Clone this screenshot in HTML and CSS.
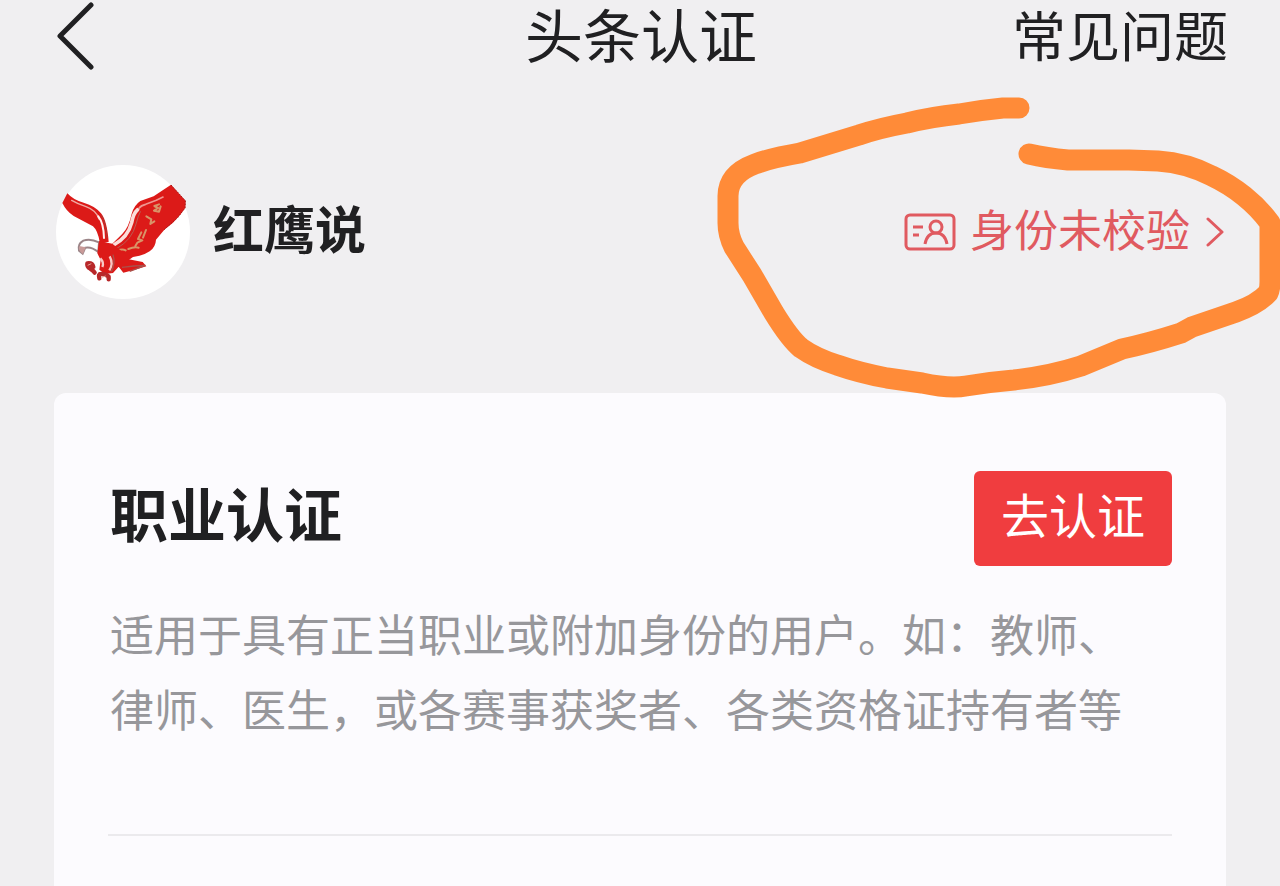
FILE: index.html
```html
<!DOCTYPE html>
<html lang="zh-CN">
  <head>
    <meta charset="UTF-8" />
    <meta name="viewport" content="width=device-width, initial-scale=1.0" />
    <title>头条认证</title>
    <link rel="stylesheet" href="styles.css">
  </head>
  <body>
    <header class="topbar">
      <button type="button" class="back" aria-label="返回">
        <svg width="40" height="68" viewBox="0 0 40 68" fill="none" stroke="#202022" stroke-width="5" stroke-linecap="round" stroke-linejoin="round">
          <path d="M37 3 6 34l31 31" />
        </svg>
      </button>
      <h1>头条认证</h1>
      <a href="#faq" class="faq">常见问题</a>
    </header>

    <section class="profile">
      <div class="avatar">
        <svg viewBox="47 44 402 402" aria-hidden="true">
          <!-- wings -->
          <path fill="#dc1a18" d="M81 129 66 158Q78 183 100 197L158 228Q172 240 178 275L205 275Q200 210 182 189Q165 167 130 157Q100 150 81 129Z" />
          <path fill="#dc1a18" d="M392 103 340 138 300 152Q282 164 274 190Q266 230 245 252L212 284Q190 270 178 277Q170 300 180 322L205 345 235 350 278 320Q310 316 328 303Q346 290 347 268L372 238 398 217 411 203 422 190 435 172 436 152Z" />
          <g fill="none" stroke-linecap="round" stroke-linejoin="round">
            <path stroke="#f0aaa4" stroke-width="4" d="M94 150q17 10 43 19 31 11 39 37" />
            <path stroke="#fff2f0" stroke-width="6" d="M174 198q16 20 17 65" />
            <path stroke="#a83c36" stroke-width="3" d="M200 262q-2-40-16-66" />
            <path stroke="#fbdedb" stroke-width="11" d="M220 284q43-23 54-67 5-28 18-39" />
            <path stroke="#bb5b53" stroke-width="3" d="M230 294q45-25 57-73 6-24 13-37" />
            <path stroke="#ef9690" stroke-width="5" d="M296 174q6-9 20-12l32-12 20-10" />
            <path stroke="#d99468" stroke-width="6" d="m356 162-14 5 11 6-12 8 15 3 5-16M318 198l15 9-3 14 12-8M317 239l-9 23M303 246l-10 20 13 4-15 7-6 10M264 296q17-7 31-4M232 300q15-5 24 0" />
            <path stroke="#a81a18" stroke-width="3" stroke-dasharray="3 6" d="m393 105 42 46-1 22-22 29-42 37" />
          </g>
          <!-- head and beak -->
          <path fill="#fff" stroke="#9b8588" stroke-width="6" d="M176 276q-27-13-47-5-18 10-13 30l11 9 8-18q18-4 39 13Z" />
          <path fill="#c99a98" d="M117 287q-3 17 11 24l8-20Z" />
          <!-- body, tail and claws -->
          <path fill="#dc1a18" d="m176 272 40 8 32 26 17 21 42 8 11 13-29 9-40 10-14-18-17 19-24 3-17-13 4-29-10-20Z" />
          <path fill="none" stroke="#f7c8c4" stroke-width="7" d="M208 318q12 22-1 42M180 324q12 12 6 26" />
          <path fill="none" stroke="#aa504a" stroke-width="4" d="M218 313q8 25-5 51M245 351l35-4 35-2-47 18" />
          <path fill="none" stroke="#b8282a" stroke-width="13" stroke-linecap="round" stroke-linejoin="round" d="M159 350q-3-13-18-11-2 10 9 16l8 6 5 6M177 384q-4-13 5-13 13-1 23 8v8" />
          <path fill="none" stroke="#e6a296" stroke-width="3" d="m142 345 11-5M184 381l12-4" />
        </svg>
      </div>
      <span class="name">红鹰说</span>
      <a href="#verify" class="status">
        <svg class="id-icon" width="52" height="38" viewBox="0 0 52 38" fill="none" stroke="currentColor" stroke-width="3" aria-hidden="true">
          <rect x="2" y="2" width="48" height="34" rx="4" />
          <path d="M9 14h10M9 22h6" />
          <circle cx="32" cy="14" r="6" />
          <path d="M21 31q2-11 11-11t11 11" />
        </svg>
        <span>身份未校验</span>
        <svg class="chevron" width="18" height="32" viewBox="0 0 18 32" fill="none" stroke="currentColor" stroke-width="3" stroke-linecap="round" stroke-linejoin="round" aria-hidden="true">
          <path d="m2 3 14 13L2 29" />
        </svg>
      </a>
      <!-- hand-drawn ring around the status link -->
      <svg class="ring" width="580" height="330" viewBox="700 80 580 330" aria-hidden="true">
        <path d="M1019 108H1003Q982 110 959 114Q931 117 907 123Q880 128 859 135L800 153Q771 158 755 164Q728 174 728 196V223Q728 235 734 247L752 275L774 313Q790 339 801 348Q815 358 837 365Q860 373 887 378L922 383Q950 389 966 386Q990 382 1014 380Q1050 376 1081 366L1122 349Q1150 343 1181 333L1192 327L1236 312Q1258 304 1268 293Q1270 289 1270 282V223Q1259 208 1244 196Q1229 184 1212 176Q1187 163 1158 161L1129 160H1068Q1046 158 1029 154" />
      </svg>
    </section>

    <main class="card">
      <div class="card-head">
        <h2>职业认证</h2>
        <button type="button" class="go">去认证</button>
      </div>
      <p>适用于具有正当职业或附加身份的用户。如：教师、律师、医生，或各赛事获奖者、各类资格证持有者等</p>
      <hr>
    </main>
  </body>
</html>
```

FILE: styles.css
```css
* {
  box-sizing: border-box;
}
body {
  display: flex;
  flex-direction: column;
  min-height: 100vh;
  margin: 0;
  background: #f0eff1;
  color: #202022;
  font-family: "Liberation Sans", "Noto Sans CJK SC", sans-serif;
}
button {
  border: none;
  font-family: inherit;
  cursor: pointer;
}
a {
  text-decoration: none;
}
.topbar {
  display: grid;
  grid-template-columns: 1fr auto 1fr;
  align-items: center;
  height: 76px;
  padding: 0 52px 0 54px;
}
.back {
  display: flex;
  justify-self: start;
  padding: 0 0 4px;
  background: none;
}
h1 {
  margin: 0;
  font-size: 58px;
  font-weight: 400;
  line-height: 72px;
}
.faq {
  justify-self: end;
  color: #202022;
  font-size: 54px;
  line-height: 72px;
}
.profile {
  position: relative;
  display: flex;
  align-items: center;
  padding: 89px 56px 94px;
}
.avatar {
  width: 134px;
  height: 134px;
  border-radius: 50%;
  background: #fff;
}
.avatar svg {
  display: block;
  overflow: visible;
}
.name {
  margin-left: 23px;
  font-size: 51px;
  font-weight: 700;
  line-height: 72px;
}
.status {
  display: flex;
  align-items: center;
  margin-left: auto;
  color: #e05a60;
  font-size: 44px;
  line-height: 72px;
}
.id-icon {
  margin-right: 14px;
}
.chevron {
  margin-left: 16px;
}
.ring {
  position: absolute;
  top: 4px;
  right: 0;
  pointer-events: none;
}
.ring path {
  fill: none;
  stroke: #ff8b38;
  stroke-width: 21;
  stroke-linecap: round;
  stroke-linejoin: round;
}
.card {
  flex: 1;
  margin: 0 54px;
  padding: 78px 54px 50px;
  border-radius: 12px 12px 0 0;
  background: #fcfbfe;
}
.card-head {
  display: flex;
  align-items: center;
  justify-content: space-between;
}
h2 {
  margin: 0;
  padding: 0 0 4px 2px;
  font-size: 58px;
  font-weight: 700;
  line-height: 72px;
}
.go {
  padding: 11px 27px 12px;
  border-radius: 6px;
  background: #f03d3f;
  color: #fff;
  font-size: 48px;
  line-height: 72px;
}
.card p {
  margin: 33px 0 0;
  padding: 0 14px 0 2px;
  color: #97979b;
  font-size: 44px;
  line-height: 75px;
}
hr {
  height: 2px;
  margin: 85px 0 0;
  border: none;
  background: #ebeaed;
}
```
